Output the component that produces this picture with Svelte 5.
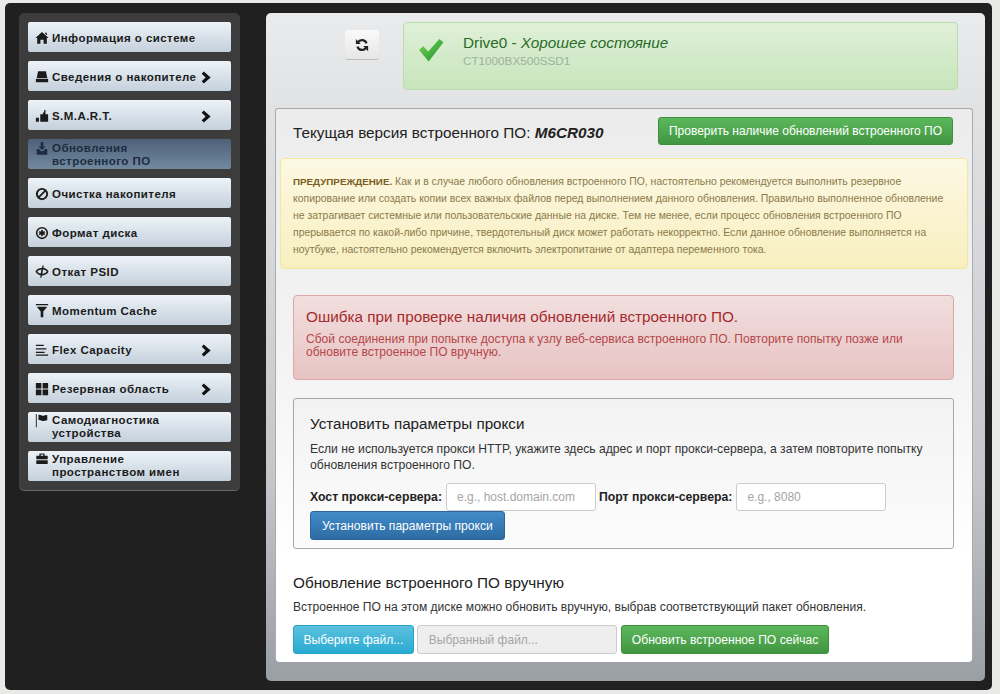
<script>
  const menu = [
    { icon: 'home', label: 'Информация о системе' },
    { icon: 'hdd', label: 'Сведения о накопителе', more: true },
    { icon: 'stats', label: 'S.M.A.R.T.', more: true },
    { icon: 'import', label: 'Обновления встроенного ПО', active: true, wrap: true },
    { icon: 'ban', label: 'Очистка накопителя' },
    { icon: 'format', label: 'Формат диска' },
    { icon: 'psid', label: 'Откат PSID' },
    { icon: 'filter', label: 'Momentum Cache' },
    { icon: 'lines', label: 'Flex Capacity', more: true },
    { icon: 'grid', label: 'Резервная область', more: true },
    { icon: 'flag', label: 'Самодиагностика устройства', wrap: true },
    { icon: 'case', label: 'Управление пространством имен', wrap: true }
  ];

  const icons = {
    home: 'M8 1 L15.5 8 H13.5 V14.5 H9.8 V10 H6.2 V14.5 H2.5 V8 H.5 Z M11.5 2 H13.5 V5 L11.5 3.2 Z',
    hdd: 'M3.5 1.5 H12.5 L14 9 H2 Z M1 10 H15 V14 H1 Z',
    stats: 'M1 10 H4.5 V14.5 H1 Z M6 6 H9 V14.5 H6 Z M9 4 H10.5 V1 H12 V6 H15 V14.5 H9 Z',
    import: 'M6.5 0 H9.5 V5 H12 L8 9 L4 5 H6.5 Z M2 8 H4.5 L7 10.5 H9 L11.5 8 H14 V14.5 H2 Z',
    ban: 'M8 1 A7 7 0 1 0 8 15 A7 7 0 1 0 8 1 Z M8 3.2 A4.8 4.8 0 0 1 10.6 4 L4 10.6 A4.8 4.8 0 0 1 8 3.2 Z M12 5.4 A4.8 4.8 0 0 1 5.4 12 Z',
    format: 'M8 1 A7 7 0 1 0 8 15 A7 7 0 1 0 8 1 Z M8 2.8 A5.2 5.2 0 1 1 8 13.2 A5.2 5.2 0 1 1 8 2.8 Z M7 4.5 H9 V6.6 L10.8 5.6 L11.8 7.3 L10 8 L11.8 8.9 L10.8 10.6 L9 9.5 V11.5 H7 V9.5 L5.2 10.6 L4.2 8.9 L6 8 L4.2 7.3 L5.2 5.6 L7 6.6 Z',
    psid: 'M9 0 L10 1 L9.6 3 C12.5 3.6 14.6 5.4 15.5 7.5 C14.6 9.8 12.5 11.6 8 12 L7 15 L6 14 L6.4 11.8 C3.5 11.2 1.4 9.6 .5 7.5 C1.4 5.2 4 3.2 8 3 Z M7.3 5 C5 5.2 3.4 6.2 2.5 7.5 C3.2 8.6 4.6 9.4 6.6 9.8 Z M9.2 5.2 L8.4 10 C11 9.8 12.6 8.8 13.5 7.5 C12.6 6.4 11 5.6 9.2 5.2 Z',
    filter: 'M1 0 H15 V1.5 H1 Z M2 3 H14 L9.5 8.5 V15 H6.5 V8.5 Z',
    lines: 'M1 2 H10 V3.5 H1 Z M1 6 H13 V7.5 H1 Z M1 10 H11 V11.5 H1 Z M1 13 H15 V14.5 H1 Z',
    grid: 'M1 1 H7.3 V7.3 H1 Z M8.7 1 H15 V7.3 H8.7 Z M1 8.7 H7.3 V15 H1 Z M8.7 8.7 H15 V15 H8.7 Z',
    flag: 'M1 0 H2 V15 H1 Z M4 1 C6 0 8 2.5 9.5 2 C11 1.5 12.5 1 14 1 V7 C12 7 10.5 8 9 8 C7 8 6 6.5 4 7 Z',
    case: 'M5 .5 H11 V3 H14.5 V7 H1.5 V3 H5 Z M6.5 1.8 V3 H9.5 V1.8 Z M1.5 8.3 H14.5 V12.5 H1.5 Z'
  };
</script>

<div class="screen">
  <div class="frame">
    <nav class="sidebar">
      {#each menu as item}
        <div class="nav-btn" class:active={item.active} class:wrap={item.wrap}>
          <svg class="nav-icon" viewBox="0 0 16 16" width="14" height="14"><path fill-rule="evenodd" d={icons[item.icon]} /></svg>
          <span class="nav-label">{item.label}</span>
          {#if item.more}
            <svg class="chevron" viewBox="0 0 12 14" width="11" height="13"><path d="M3 .5 L10.5 7 L3 13.5 L.8 11 L5 7 L.8 3 Z" /></svg>
          {/if}
        </div>
      {/each}
    </nav>

    <main class="content">
      <div class="top-row">
        <button class="refresh" aria-label="Обновить">
          <svg viewBox="0 0 16 16" width="14" height="14" fill="none" stroke="#222" stroke-width="2.6">
            <path d="M13.2 6.2 A5.5 5.5 0 0 0 3.4 4.8" />
            <path d="M2.8 9.8 A5.5 5.5 0 0 0 12.6 11.2" />
            <path d="M1 1 V6.8 H6.6 Z M15 15 V9.2 H9.4 Z" fill="#222" stroke="none" />
          </svg>
        </button>
        <div class="drive">
          <svg class="check" viewBox="0 0 28 26" width="26" height="24">
            <defs>
              <linearGradient id="chk" x1="0" y1="0" x2="1" y2="1">
                <stop offset="0" stop-color="#7ad858" />
                <stop offset="1" stop-color="#1c8f2c" />
              </linearGradient>
            </defs>
            <path d="M1 13 L5.5 9 L11 14.5 L23 1 L27.5 4.5 L11.5 25.5 Z" fill="url(#chk)" />
          </svg>
          <div>
            <div class="drive-name">Drive0 - <em>Хорошее состояние</em></div>
            <div class="drive-model">CT1000BX500SSD1</div>
          </div>
        </div>
      </div>

      <div class="card">
        <div class="fw-head">
          <h4>Текущая версия встроенного ПО: <b>M6CR030</b></h4>
          <button class="btn green check-btn">Проверить наличие обновлений встроенного ПО</button>
        </div>

        <div class="warning">
          <b>ПРЕДУПРЕЖДЕНИЕ.</b> Как и в случае любого обновления встроенного ПО, настоятельно рекомендуется выполнить резервное копирование или создать копии всех важных файлов перед выполнением данного обновления. Правильно выполненное обновление не затрагивает системные или пользовательские данные на диске. Тем не менее, если процесс обновления встроенного ПО прерывается по какой-либо причине, твердотельный диск может работать некорректно. Если данное обновление выполняется на ноутбуке, настоятельно рекомендуется включить электропитание от адаптера переменного тока.
        </div>

        <div class="inner">
          <div class="error">
            <div class="error-title">Ошибка при проверке наличия обновлений встроенного ПО.</div>
            <div class="error-text">Сбой соединения при попытке доступа к узлу веб-сервиса встроенного ПО. Повторите попытку позже или обновите встроенное ПО вручную.</div>
          </div>

          <div class="proxy">
            <h4>Установить параметры прокси</h4>
            <p>Если не используется прокси HTTP, укажите здесь адрес и порт прокси-сервера, а затем повторите попытку обновления встроенного ПО.</p>
            <div class="proxy-form">
              <span class="lbl">Хост прокси-сервера:</span>
              <input class="host" placeholder="e.g., host.domain.com" />
              <span class="lbl second">Порт прокси-сервера:</span>
              <input class="port" placeholder="e.g., 8080" />
            </div>
            <button class="btn blue">Установить параметры прокси</button>
          </div>

          <h4 class="manual-title">Обновление встроенного ПО вручную</h4>
          <p class="manual-text">Встроенное ПО на этом диске можно обновить вручную, выбрав соответствующий пакет обновления.</p>
          <div class="manual-row">
            <button class="btn cyan">Выберите файл...</button>
            <input class="file" placeholder="Выбранный файл..." disabled />
            <button class="btn green update">Обновить встроенное ПО сейчас</button>
          </div>
        </div>
      </div>
    </main>
  </div>
</div>

<style>
  :global(body) {
    margin: 0;
    background: #e9e9e7;
    font-family: "Liberation Sans", Arial, sans-serif;
  }

  .screen {
    height: 694px;
    padding: 3px 8px 4px 5px;
    box-sizing: border-box;
    overflow: hidden;
  }

  .frame {
    display: flex;
    align-items: flex-start;
    gap: 26px;
    height: 100%;
    padding: 10px 7px 9px 14px;
    box-sizing: border-box;
    background: #202020;
    border-radius: 5px;
  }

  .sidebar {
    display: flex;
    flex-direction: column;
    gap: 9px;
    flex: none;
    width: 221px;
    padding: 9px;
    box-sizing: border-box;
    background: #3c3c3c;
    border-radius: 5px;
    border-bottom: 1px solid #666;
  }

  .nav-btn {
    display: flex;
    align-items: center;
    height: 30px;
    box-sizing: border-box;
    padding: 2px 19px 0 7px;
    background: linear-gradient(#edf3f8, #c4d0db);
    border-radius: 2px;
    color: #1b1b1b;
    font-size: 11.5px;
    font-weight: bold;
    letter-spacing: 0.45px;
    line-height: 13px;
    white-space: nowrap;
  }

  .nav-btn.wrap {
    padding-top: 0;
    white-space: normal;
  }

  .nav-btn.wrap .nav-label {
    flex: none;
    width: 132px;
  }

  .nav-btn.wrap .nav-icon {
    align-self: flex-start;
    margin-top: 2px;
  }

  .nav-btn.active {
    padding-top: 1px;
    background: linear-gradient(#4d6078, #71899f);
    color: #1d2c3e;
  }

  .nav-icon {
    flex: none;
    margin-right: 3px;
    fill: currentColor;
  }

  .nav-label {
    flex: 1;
    min-width: 0;
  }

  .chevron {
    flex: none;
    fill: #111;
  }

  .content {
    flex: none;
    width: 719px;
    height: 668px;
    box-sizing: border-box;
    padding: 9px 9px 0;
    background: linear-gradient(#eaebec, #dfe0e2 18%, #c4c6ca 70%, #9a9ea5);
    border-radius: 5px;
    overflow: hidden;
  }

  .top-row {
    display: flex;
    align-items: flex-start;
    height: 86px;
    padding-left: 70px;
  }

  .refresh {
    flex: none;
    display: flex;
    align-items: center;
    justify-content: center;
    width: 34px;
    height: 30px;
    margin: 8px 24px 0 0;
    padding: 0;
    background: linear-gradient(#fafafa, #e6e6e6);
    border: 0;
    border-bottom: 1px solid #bbb;
    border-radius: 3px;
  }

  .drive {
    display: flex;
    align-items: flex-start;
    width: 555px;
    height: 68px;
    box-sizing: border-box;
    padding: 11px 14px;
    background: linear-gradient(#dff0d8, #c8e5bc);
    border: 1px solid #b9deaa;
    border-radius: 4px;
    color: #2b6a2b;
  }

  .check {
    flex: none;
    margin: 4px 19px 0 0;
  }

  .drive-name {
    font-size: 15.3px;
    line-height: 18px;
    color: #2a6b2a;
  }

  .drive-model {
    margin-top: 2px;
    font-size: 11.7px;
    line-height: 14px;
    color: #9db39a;
  }

  .card {
    height: 554px;
    box-sizing: border-box;
    padding: 8px 4px 0;
    width: 698px;
    background: linear-gradient(#ececed, #f3f3f4 45%, #fff 80%);
    border: 1px solid #a9abad;
    border-bottom: 0;
    border-radius: 3px 3px 4px 4px;
  }

  .fw-head {
    display: flex;
    align-items: center;
    justify-content: space-between;
    padding: 0 15px 0 13px;
    height: 28px;
    margin-bottom: 13px;
  }

  .fw-head h4 {
    padding-top: 3px;
    font-size: 15.3px;
  }

  h4 {
    margin: 0;
    font-size: 15.2px;
    font-weight: normal;
    color: #222;
  }

  .fw-head b {
    font-style: italic;
  }

  .btn {
    height: 28px;
    box-sizing: border-box;
    padding: 0 11px;
    border: 1px solid transparent;
    border-radius: 3px;
    color: #fff;
    font-family: inherit;
    font-size: 12.1px;
    white-space: nowrap;
  }

  .check-btn {
    font-size: 12px;
    padding: 0 10px;
  }

  .green {
    background: linear-gradient(#5cb85c, #419641);
    border-color: #3e8f3e;
  }

  .blue {
    height: 29px;
    background: linear-gradient(#428bca, #2d6ca2);
    border-color: #2b669a;
  }

  .cyan {
    background: linear-gradient(#5bc0de, #2aabd2);
    border-color: #28a4c9;
  }

  .warning {
    box-sizing: border-box;
    height: 111px;
    padding: 14px 12px;
    background: linear-gradient(#fcf8e3, #f8efc0);
    border: 1px solid #f5e79e;
    border-radius: 4px;
    color: #8a7a4a;
    font-size: 10.45px;
    line-height: 17px;
  }

  .warning b {
    color: #7a5d20;
    font-size: 9.8px;
  }

  .inner {
    padding: 26px 14px 0 13px;
  }

  .error {
    box-sizing: border-box;
    height: 85px;
    padding: 12px 12px;
    background: linear-gradient(#f2dede, #e7c3c3);
    border: 1px solid #dca7a7;
    border-radius: 4px;
    color: #b5474a;
    font-size: 12.05px;
    line-height: 13px;
  }

  .error-title {
    margin-bottom: 7px;
    font-size: 15.3px;
    line-height: 18px;
    color: #a52a2d;
  }

  .proxy {
    box-sizing: border-box;
    height: 151px;
    margin-top: 18px;
    padding: 16px 16px 0;
    background: linear-gradient(#f2f2f3, #fcfcfc);
    border: 1px solid #a5a7aa;
    border-radius: 3px;
  }

  .proxy p {
    margin: 9px 0 10px;
    font-size: 12.15px;
    line-height: 16px;
    color: #333;
  }

  .proxy-form {
    display: flex;
    align-items: center;
    gap: 4px;
    font-size: 12.25px;
    color: #222;
  }

  .lbl {
    font-weight: bold;
    white-space: nowrap;
  }

  .lbl.second {
    margin-left: -1px;
  }

  input {
    height: 28px;
    box-sizing: border-box;
    padding: 0 10px;
    background: #fff;
    border: 1px solid #ccc;
    border-radius: 3px;
    font-family: inherit;
    font-size: 12px;
    color: #555;
  }

  input::placeholder {
    color: #a5a5a5;
  }

  .host {
    width: 150px;
  }

  .port {
    width: 150px;
  }

  .manual-title {
    margin: 25px 0 0;
    font-size: 15.3px;
    line-height: 18px;
  }

  .manual-text {
    margin: 8px 0 10px;
    font-size: 12.07px;
    line-height: 15px;
    color: #333;
  }

  .manual-row {
    display: flex;
    gap: 3px;
  }

  .manual-row .btn,
  .manual-row input {
    height: 29px;
  }

  .manual-row .btn {
    padding: 0 10px;
  }

  .manual-row .cyan {
    padding: 0 9.5px;
  }

  .file {
    width: 200px;
    padding: 0 11px;
    background: #eee;
  }

  .update {
    margin-left: 1px;
  }
</style>
